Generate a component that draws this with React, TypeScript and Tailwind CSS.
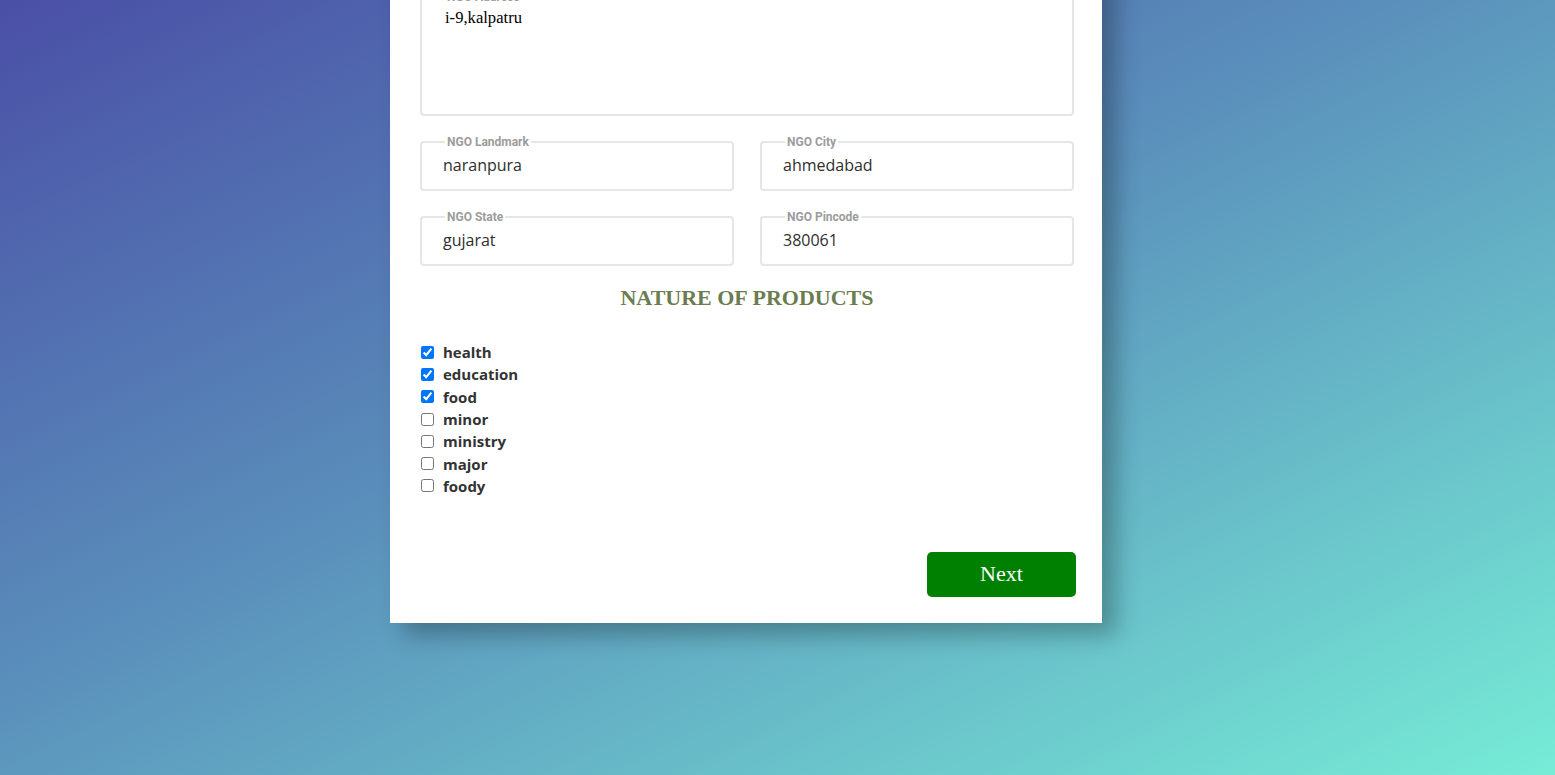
import React from "react";

const products = [
  { name: "health", checked: true },
  { name: "education", checked: true },
  { name: "food", checked: true },
  { name: "minor", checked: false },
  { name: "ministry", checked: false },
  { name: "major", checked: false },
  { name: "foody", checked: false },
];

function Field({ label, value }: { label: string; value: string }) {
  return (
    <fieldset className="m-0 rounded-[4px] border-2 border-[#e6e6e6] p-0 pb-[12px]">
      <legend className="ml-[23px] px-[2px] font-['Roboto',sans-serif] text-[12px] font-bold leading-[14px] text-[#9c9c9c]">
        {label}
      </legend>
      <input
        defaultValue={value}
        className="block h-[28px] w-full bg-transparent pl-[21px] pt-[4px] font-['Open_Sans',sans-serif] text-[16px] text-[#2e2e2e] outline-none"
      />
    </fieldset>
  );
}

export default function App() {
  return (
    <div className="h-[775px] w-full overflow-hidden bg-[linear-gradient(to_bottom_right,#4a4fa6,#5a8fbb_45%,#76ecd6)]">
      <div className="ml-[390px] mt-[-40px] w-[712px] bg-white pb-[26px] pl-[30px] pr-[28px] pt-[30px] shadow-[14px_12px_22px_rgba(0,0,0,0.28)]">
        <div className="flex flex-col gap-[19px]">
          <fieldset className="m-0 rounded-[4px] border-2 border-[#e6e6e6] p-0">
            <legend className="ml-[23px] px-[2px] font-['Roboto',sans-serif] text-[12px] font-bold leading-[14px] text-[#9c9c9c]">
              NGO Address
            </legend>
            <textarea
              defaultValue="i-9,kalpatru"
              spellCheck={false}
              className="block h-[110px] w-full resize-none bg-transparent pl-[23px] pt-[5px] font-['Liberation_Serif',serif] text-[16.6px] leading-[18px] text-black outline-none"
            />
          </fieldset>
          <div className="grid grid-cols-2 gap-x-[26px] gap-y-[19px]">
            <Field label="NGO Landmark" value="naranpura" />
            <Field label="NGO City" value="ahmedabad" />
            <Field label="NGO State" value="gujarat" />
            <Field label="NGO Pincode" value="380061" />
          </div>
        </div>

        <h2 className="mt-[19px] text-center font-['Liberation_Serif',serif] text-[22px] font-bold leading-[25px] text-[#6b7c50]">
          NATURE OF PRODUCTS
        </h2>

        <div className="mt-[31px] flex flex-col">
          {products.map((p) => (
            <label key={p.name} className="flex h-[22.3px] items-center">
              <input
                type="checkbox"
                defaultChecked={p.checked}
                className="m-0 ml-[1px] h-[13px] w-[13px]"
              />
              <span className="ml-[9px] font-['Open_Sans',sans-serif] text-[15px] font-bold leading-[20px] text-[#333]">
                {p.name}
              </span>
            </label>
          ))}
        </div>

        <div className="mr-[-2px] mt-[55px] flex justify-end">
          <button className="h-[45px] w-[149px] rounded-[5px] bg-[#008000] pb-[2px] font-['Liberation_Serif',serif] text-[22px] text-white">
            Next
          </button>
        </div>
      </div>
    </div>
  );
}
